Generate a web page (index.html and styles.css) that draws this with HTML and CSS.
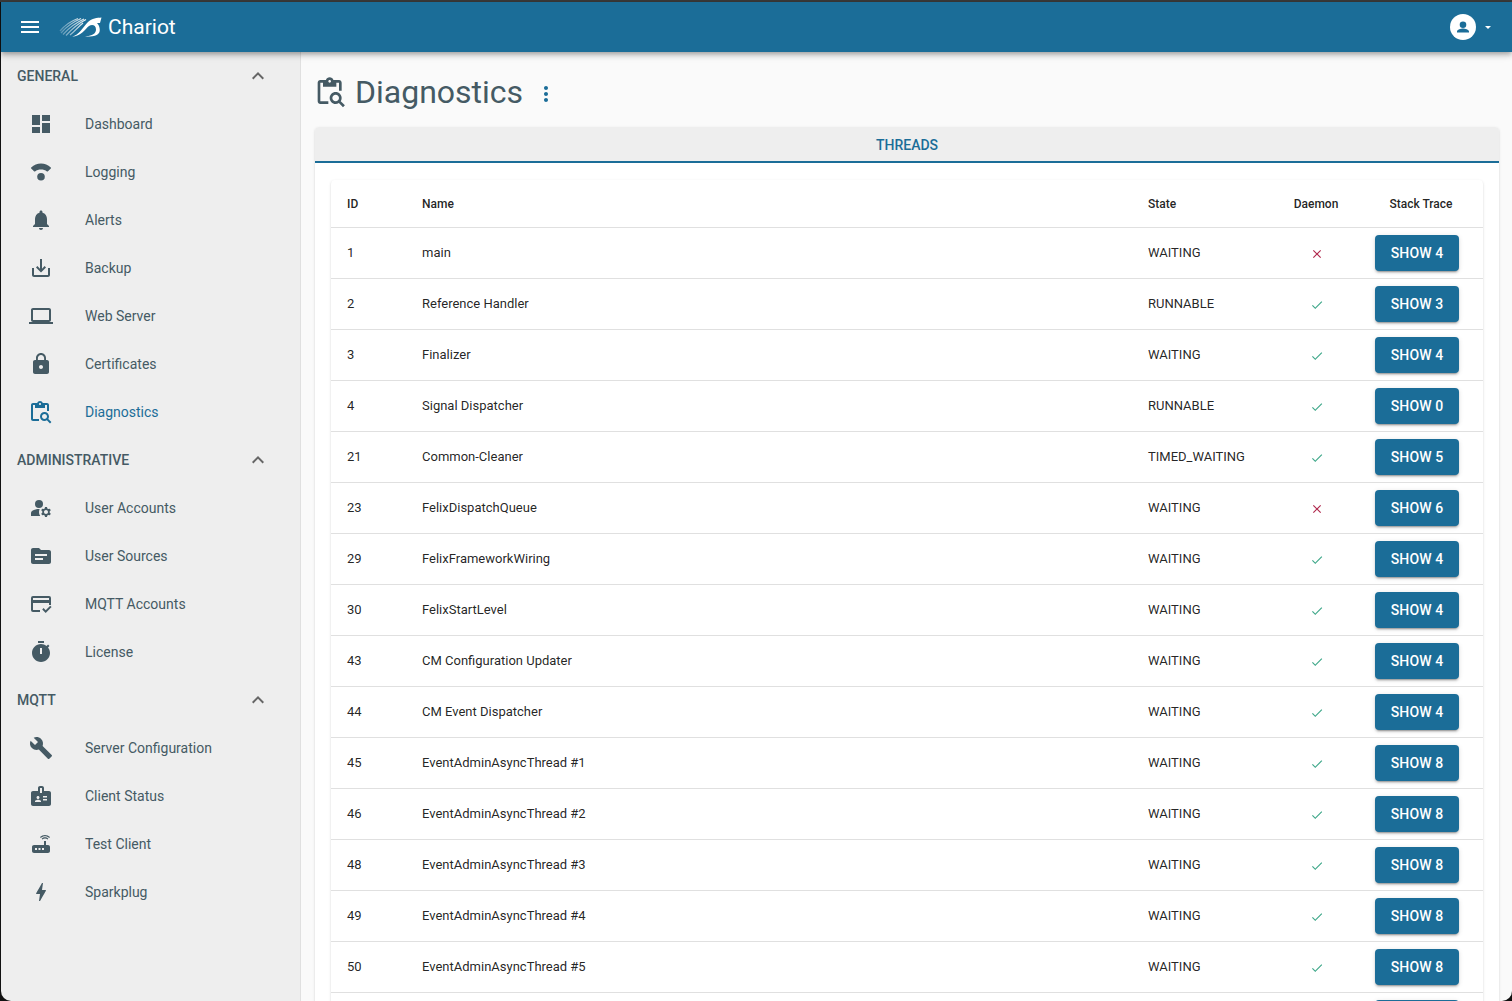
FILE: index.html
```html
<!DOCTYPE html>
<html lang="en">
<head>
<meta charset="utf-8">
<title>Chariot - Diagnostics</title>
<link rel="stylesheet" href="styles.css">
</head>
<body>
<div class="app">
  <header class="topbar">
    <svg class="menu-icon" viewBox="0 0 24 24"><path d="M3 18h18v-2H3v2zm0-5h18v-2H3v2zm0-7v2h18V6H3z"/></svg>
    <svg class="logo" viewBox="0 0 43 20">
      <defs><linearGradient id="fade" x1="0" y1="0" x2="1" y2="0"><stop offset="0" stop-color="#fff" stop-opacity=".25"/><stop offset="1" stop-color="#fff" stop-opacity=".95"/></linearGradient></defs>
      <path class="logo-streak" d="M1 14 C6 8 12 4 19 1.500 M2 16 C7 10 14 5 22 1.500 M4 17.500 C9 12 16 6 25 2 M7 18.500 C12 13 18 7 27 2.500 M11 18 C15 15 19 10 24 6"/>
      <path d="M13 19.500 C20 18.500 24 10 29 5 C33 1 38 1 42.500 .500 L41 6 L38 6 C41 9 41.500 14 40 16 C37 20 30 20 26 19 C32 19.500 37 17 37 12.500 C37 8 33 7 30 9 C26 12 22 19.500 13 19.500 Z"/>
    </svg>
    <span class="brand">Chariot</span>
    <span class="spacer"></span>
    <svg class="avatar" viewBox="0 0 26 26"><circle class="avatar-bg" cx="13" cy="13" r="13"/><path class="avatar-person" d="M13 7.500a3.300 3.300 0 1 1 0 6.600 3.300 3.300 0 0 1 0-6.600zM7 18.500v-.9c0-2 4-3 6-3s6 1 6 3v.9H7z"/></svg>
    <svg class="caret" viewBox="0 0 6 3"><path d="M0 0h6L3 3z"/></svg>
  </header>
  <div class="body">
    <nav class="sidebar">
      <div class="group-head"><span>GENERAL</span><svg class="chev" viewBox="0 0 24 24"><path d="M12 8l-6 6 1.410 1.410L12 10.830l4.590 4.580L18 14z"/></svg></div>
      <a class="item"><svg class="ico" viewBox="0 0 24 24"><path d="M3 13h8V3H3v10zm0 8h8v-6H3v6zm10 0h8V11h-8v10zm0-18v6h8V3h-8z"/></svg>Dashboard</a>
      <a class="item"><svg class="ico" viewBox="0 0 24 24"><path d="M2.200 7.600C5 5 8.300 3.600 12 3.600s7 1.400 9.800 4c.3.3.3.7 0 1L19 11.300c-.3.3-.7.3-1 .1-1.700-1.200-3.800-1.800-6-1.800s-4.300.6-6 1.800c-.3.2-.7.2-1-.1L2.200 8.600c-.3-.3-.3-.7 0-1z"/><circle cx="12" cy="16.700" r="3.800"/></svg>Logging</a>
      <a class="item"><svg class="ico" viewBox="0 0 24 24"><path d="M12 22c1.100 0 2-.9 2-2h-4c0 1.100.89 2 2 2zm6-6v-5c0-3.070-1.640-5.640-4.500-6.320V4c0-.83-.67-1.500-1.500-1.500s-1.500.67-1.500 1.500v.68C7.630 5.360 6 7.920 6 11v5l-2 2v1h16v-1l-2-2z"/></svg>Alerts</a>
      <a class="item"><svg class="ico" viewBox="0 0 24 24"><path d="M19 12v7H5v-7H3v7c0 1.100.9 2 2 2h14c1.100 0 2-.9 2-2v-7h-2zm-6 .67l2.590-2.580L17 11.500l-5 5-5-5 1.410-1.410L11 12.670V3h2z"/></svg>Backup</a>
      <a class="item"><svg class="ico" viewBox="0 0 24 24"><path d="M20 18c1.100 0 1.990-.9 1.990-2L22 6c0-1.100-.9-2-2-2H4c-1.100 0-2 .9-2 2v10c0 1.100.9 2 2 2H0v2h24v-2h-4zM4 6h16v10H4V6z"/></svg>Web Server</a>
      <a class="item"><svg class="ico" viewBox="0 0 24 24"><path d="M18 8h-1V6c0-2.760-2.240-5-5-5S7 3.240 7 6v2H6c-1.100 0-2 .9-2 2v10c0 1.100.9 2 2 2h12c1.100 0 2-.9 2-2V10c0-1.100-.9-2-2-2zm-6 9c-1.100 0-2-.9-2-2s.9-2 2-2 2 .9 2 2-.9 2-2 2zm3.100-9H8.900V6c0-1.710 1.390-3.100 3.100-3.100 1.710 0 3.100 1.390 3.100 3.100v2z"/></svg>Certificates</a>
      <a class="item active"><svg class="ico" viewBox="0 0 24 24"><path d="M20 11V5c0-1.100-.9-2-2-2h-4.180C13.400 1.840 12.300 1 11 1s-2.400.84-2.820 2H4c-1.100 0-2 .9-2 2v14c0 1.100.9 2 2 2h6v-2H4V5h2v3h10V5h2v6h2zm-9-6c-.55 0-1-.45-1-1s.45-1 1-1 1 .45 1 1-.45 1-1 1z"/><path d="M15.500 12C13 12 11 14 11 16.500s2 4.500 4.500 4.500c.88 0 1.700-.26 2.390-.7L21 23.420 22.420 22l-3.120-3.110c.44-.69.7-1.510.7-2.390C20 14 18 12 15.500 12zm0 7c-1.380 0-2.500-1.120-2.500-2.500s1.120-2.500 2.500-2.500 2.500 1.120 2.500 2.500-1.120 2.500-2.500 2.500z"/></svg>Diagnostics</a>
      <div class="group-head"><span>ADMINISTRATIVE</span><svg class="chev" viewBox="0 0 24 24"><path d="M12 8l-6 6 1.410 1.410L12 10.830l4.590 4.580L18 14z"/></svg></div>
      <a class="item"><svg class="ico" viewBox="0 0 24 24"><circle cx="10" cy="8" r="4"/><path d="M10.670 13.020c-.22-.01-.44-.02-.67-.02-2.420 0-4.680.67-6.610 1.820-.88.52-1.390 1.500-1.390 2.530V20h9.260c-.79-1.130-1.260-2.510-1.260-4 0-1.070.25-2.070.67-2.980z"/><path d="M20.750 16c0-.22-.03-.42-.06-.63l1.140-1.010-1-1.730-1.450.49c-.32-.27-.68-.48-1.080-.63L18 11h-2l-.3 1.490c-.4.15-.76.36-1.080.63l-1.450-.49-1 1.730 1.140 1.010c-.03.21-.06.41-.06.63s.03.42.06.63l-1.140 1.010 1 1.730 1.450-.49c.32.27.68.48 1.080.63L16 21h2l.3-1.490c.4-.15.76-.36 1.080-.63l1.450.49 1-1.730-1.140-1.010c.03-.21.06-.41.06-.63zM17 18c-1.100 0-2-.9-2-2s.9-2 2-2 2 .9 2 2-.9 2-2 2z"/></svg>User Accounts</a>
      <a class="item"><svg class="ico" viewBox="0 0 24 24"><path d="M20 6h-8l-2-2H4c-1.100 0-1.990.9-1.990 2L2 18c0 1.100.9 2 2 2h16c1.100 0 2-.9 2-2V8c0-1.100-.9-2-2-2zm-6 10H6v-2h8v2zm4-4H6v-2h12v2z"/></svg>User Sources</a>
      <a class="item"><svg class="ico" viewBox="0 0 24 24"><path d="M4 4h16a2 2 0 0 1 2 2v7h-2v-2H4v7h7v2H4a2 2 0 0 1-2-2V6a2 2 0 0 1 2-2zm0 2v2h16V6H4z"/><path d="M13.200 17.500l1.400-1.400 2.100 2.100 4.500-4.500 1.400 1.400-5.900 5.900z"/></svg>MQTT Accounts</a>
      <a class="item"><svg class="ico" viewBox="0 0 24 24"><path fill-rule="evenodd" d="M15 1H9v2h6V1zm-4 13h2V8h-2v6zm8.030-6.610l1.420-1.420c-.43-.51-.9-.99-1.410-1.410l-1.420 1.420C16.070 4.740 14.120 4 12 4c-4.970 0-9 4.030-9 9s4.020 9 9 9 9-4.030 9-9c0-2.120-.74-4.070-1.970-5.610z"/></svg>License</a>
      <div class="group-head"><span>MQTT</span><svg class="chev" viewBox="0 0 24 24"><path d="M12 8l-6 6 1.410 1.410L12 10.830l4.590 4.580L18 14z"/></svg></div>
      <a class="item"><svg class="ico" viewBox="0 0 24 24"><path d="M22.700 19l-9.100-9.100c.9-2.300.4-5-1.500-6.900-2-2-5-2.400-7.400-1.300L9 6 6 9 1.600 4.700C.4 7.100.9 10.100 2.900 12.100c1.900 1.900 4.600 2.400 6.900 1.500l9.100 9.100c.4.4 1 .4 1.400 0l2.300-2.300c.5-.4.5-1.100.1-1.400z"/></svg>Server Configuration</a>
      <a class="item"><svg class="ico" viewBox="0 0 24 24"><path d="M20 7h-5V4c0-1.100-.9-2-2-2h-2c-1.100 0-2 .9-2 2v3H4c-1.100 0-2 .9-2 2v11c0 1.100.9 2 2 2h16c1.100 0 2-.9 2-2V9c0-1.100-.9-2-2-2zM9 12c.83 0 1.500.67 1.500 1.500S9.830 15 9 15s-1.500-.67-1.500-1.500S8.170 12 9 12zm3 6H6v-.75c0-1 2-1.500 3-1.500s3 .5 3 1.500V18zm1-9h-2V4h2v5zm5 7.500h-4V15h4v1.500zm0-3h-4V12h4v1.500z"/></svg>Client Status</a>
      <a class="item"><svg class="ico" viewBox="0 0 24 24"><path d="M20.200 5.900l.8-.8C19.600 3.700 17.800 3 16 3s-3.600.7-5 2.100l.8.8C13 4.800 14.500 4.200 16 4.200s3 .6 4.200 1.700zm-.9.8c-.9-.9-2.100-1.400-3.300-1.400s-2.400.5-3.300 1.400l.8.8c.7-.7 1.600-1 2.500-1 .9 0 1.800.3 2.500 1l.8-.8zM19 13h-2V9h-2v4H5c-1.100 0-2 .9-2 2v4c0 1.100.9 2 2 2h14c1.100 0 2-.9 2-2v-4c0-1.100-.9-2-2-2zM8 18H6v-2h2v2zm3.500 0h-2v-2h2v2zm3.500 0h-2v-2h2v2z"/></svg>Test Client</a>
      <a class="item"><svg class="ico" viewBox="0 0 24 24"><path d="M11 21h-1l1-7H7.500c-.58 0-.57-.32-.38-.66.19-.34.05-.08.07-.12C8.480 10.940 10.420 7.540 13 3h1l-1 7h3.500c.49 0 .56.33.47.51l-.07.15C12.960 17.550 11 21 11 21z"/></svg>Sparkplug</a>
    </nav>
    <main class="main">
      <div class="title-row">
        <svg class="title-ico" viewBox="0 0 24 24"><path d="M20 11V5c0-1.100-.9-2-2-2h-4.180C13.400 1.840 12.300 1 11 1s-2.400.84-2.820 2H4c-1.100 0-2 .9-2 2v14c0 1.100.9 2 2 2h6v-2H4V5h2v3h10V5h2v6h2zm-9-6c-.55 0-1-.45-1-1s.45-1 1-1 1 .45 1 1-.45 1-1 1z"/><path d="M15.500 12C13 12 11 14 11 16.500s2 4.500 4.500 4.500c.88 0 1.700-.26 2.390-.7L21 23.420 22.420 22l-3.120-3.110c.44-.69.7-1.510.7-2.390C20 14 18 12 15.500 12zm0 7c-1.380 0-2.500-1.120-2.500-2.500s1.120-2.500 2.500-2.500 2.500 1.120 2.500 2.500-1.120 2.500-2.500 2.500z"/></svg>
        <h1 class="title">Diagnostics</h1>
        <svg class="more" viewBox="0 0 24 24"><path d="M12 8c1.100 0 2-.9 2-2s-.9-2-2-2-2 .9-2 2 .9 2 2 2zm0 2c-1.100 0-2 .9-2 2s.9 2 2 2 2-.9 2-2-.9-2-2-2zm0 6c-1.100 0-2 .9-2 2s.9 2 2 2 2-.9 2-2-.9-2-2-2z"/></svg>
      </div>
      <section class="card">
        <div class="tab"><span>THREADS</span></div>
        <div class="card-body">
          <div class="table-wrap">
            <table class="tbl">
              <colgroup><col class="c-id"><col class="c-name"><col class="c-state"><col class="c-daemon"><col class="c-trace"></colgroup>
              <thead><tr><th>ID</th><th>Name</th><th>State</th><th class="center">Daemon</th><th class="center">Stack Trace</th></tr></thead>
              <tbody id="rows"></tbody>
            </table>
          </div>
        </div>
      </section>
    </main>
  </div>
</div>
<script src="app.js"></script>
</body>
</html>
```

FILE: styles.css
```css
* { box-sizing: border-box; }
html, body { margin: 0; height: 100%; overflow: hidden; }
body { background: #0a0a0a; font-family: Roboto, "Liberation Sans", sans-serif; }
.app { height: 1001px; width: 1512px; border-top: 2px solid #3a3a3a; padding-left: 1px; background: #111; display: flex; flex-direction: column; }
.topbar { height: 50px; flex: none; background: #1b6d98; color: #fff; display: flex; align-items: center; padding-left: 16.5px; position: relative; z-index: 2; box-shadow: 0 2px 4px -1px rgba(0,0,0,.2), 0 4px 5px 0 rgba(0,0,0,.14), 0 1px 10px 0 rgba(0,0,0,.12); }
.menu-icon { width: 24px; height: 24px; fill: #fff; flex: none; }
.logo { width: 43px; height: 20px; margin-left: 17.5px; fill: #fff; flex: none; }
.logo-streak { fill: none; stroke: url(#fade); stroke-width: 1.3px; }
.brand { font-size: 21px; margin-left: 6px; line-height: 50px; }
.spacer { flex: 1; }
.avatar { width: 26px; height: 26px; flex: none; }
.avatar-bg { fill: #fff; }
.avatar-person { fill: #1b6d98; }
.caret { width: 6px; height: 3px; fill: #fff; margin-left: 9px; margin-right: 21px; flex: none; }
.body { flex: 1; display: flex; min-height: 0; border-radius: 0 0 10px 10px; overflow: hidden; }
.sidebar { width: 300px; flex: none; background: #eee; border-right: 1px solid #e0e0e0; color: #455a64; }
.group-head { height: 48px; display: flex; align-items: center; justify-content: space-between; padding: 0 30px 0 16px; font-size: 14px; font-weight: 500; }
.chev { width: 24px; height: 24px; fill: #666; }
.item { height: 48px; display: flex; align-items: center; padding-left: 28px; font-size: 14px; color: #455a64; }
.ico { width: 24px; height: 24px; fill: #455a64; margin-right: 32px; flex: none; }
.item.active { color: #1b6d98; }
.item.active .ico { fill: #1b6d98; }
.main { flex: 1; min-width: 0; background: #fafafa; padding: 0 13px 0 14px; overflow: hidden; }
.title-row { height: 75px; display: flex; align-items: center; padding: 5px 0 0 0; }
.title-ico { width: 32px; height: 32px; fill: #455a64; flex: none; margin-right: 8px; }
.title { margin: 0; font-size: 32px; font-weight: 400; color: #455a64; }
.more { width: 24px; height: 24px; fill: #1b6d98; margin-left: 11px; margin-top: 3px; flex: none; }
.card { background: #fff; border-radius: 4px 4px 0 0; box-shadow: 0 2px 1px -1px rgba(0,0,0,.2), 0 1px 1px 0 rgba(0,0,0,.14), 0 1px 3px 0 rgba(0,0,0,.12); }
.tab { height: 36px; background: #eee; border-bottom: 2px solid #1b6d98; border-radius: 4px 4px 0 0; text-align: center; font-size: 14px; font-weight: 500; color: #1b6d98; line-height: 36px; }
.card-body { padding: 17px 16px 0; }
.table-wrap { background: #fff; border-radius: 4px 4px 0 0; box-shadow: 0 2px 1px -1px rgba(0,0,0,.2), 0 1px 1px 0 rgba(0,0,0,.14), 0 1px 3px 0 rgba(0,0,0,.12); }
.tbl { width: 100%; border-collapse: collapse; table-layout: fixed; font-size: 13px; color: rgba(0,0,0,.87); }
.c-id { width: 75px; }
.c-name { width: 726px; }
.c-state { width: 141px; }
.c-daemon { width: 86px; }
.c-trace { width: 124px; }
.tbl th { height: 47px; text-align: left; padding: 2px 0 0 16px; font-weight: 500; font-size: 12px; line-height: 16px; border-bottom: 1px solid #e0e0e0; }
.tbl th.center { text-align: center; padding: 2px 0 0; }
.tbl td { height: 51px; padding: 0 0 0 16px; border-bottom: 1px solid #e0e0e0; font-size: 13px; }
.tbl td.center { text-align: center; padding: 0; }
.mark { width: 14px; height: 14px; display: inline-block; vertical-align: middle; margin: 1px 0 0 1px; }
.mark.yes { fill: #3fa88a; }
.mark.no { fill: #b0294e; }
.btn { width: 84px; height: 36px; margin-top: 1px; display: block; border: 0; border-radius: 4px; background: #1b6d98; color: #fff; font: 500 14px Roboto, "Liberation Sans", sans-serif; letter-spacing: .1px; padding: 0; box-shadow: 0 3px 1px -2px rgba(0,0,0,.2), 0 2px 2px 0 rgba(0,0,0,.14), 0 1px 5px 0 rgba(0,0,0,.12); }
```

FILE: app.js
```js
var data = [
  [1, "main", "WAITING", 0, "SHOW 4"], [2, "Reference Handler", "RUNNABLE", 1, "SHOW 3"], [3, "Finalizer", "WAITING", 1, "SHOW 4"],
  [4, "Signal Dispatcher", "RUNNABLE", 1, "SHOW 0"], [21, "Common-Cleaner", "TIMED_WAITING", 1, "SHOW 5"], [23, "FelixDispatchQueue", "WAITING", 0, "SHOW 6"],
  [29, "FelixFrameworkWiring", "WAITING", 1, "SHOW 4"], [30, "FelixStartLevel", "WAITING", 1, "SHOW 4"], [43, "CM Configuration Updater", "WAITING", 1, "SHOW 4"],
  [44, "CM Event Dispatcher", "WAITING", 1, "SHOW 4"], [45, "EventAdminAsyncThread #1", "WAITING", 1, "SHOW 8"], [46, "EventAdminAsyncThread #2", "WAITING", 1, "SHOW 8"],
  [48, "EventAdminAsyncThread #3", "WAITING", 1, "SHOW 8"], [49, "EventAdminAsyncThread #4", "WAITING", 1, "SHOW 8"], [50, "EventAdminAsyncThread #5", "WAITING", 1, "SHOW 8"],
  ["", "", "", 1, ""]
];
var yes = '<svg class="mark yes" viewBox="0 0 24 24"><path d="M9 16.170L4.830 12l-1.420 1.410L9 19 21 7l-1.410-1.410z"/></svg>';
var no = '<svg class="mark no" viewBox="0 0 24 24"><path d="M19 6.410L17.590 5 12 10.590 6.410 5 5 6.410 10.590 12 5 17.590 6.410 19 12 13.410 17.590 19 19 17.590 13.410 12z"/></svg>';
document.getElementById("rows").innerHTML = data.map(function (r) {
  return "<tr><td>" + r[0] + "</td><td>" + r[1] + "</td><td>" + r[2] + '</td><td class="center">' + (r[3] ? yes : no) +
    '</td><td><button class="btn">' + r[4] + "</button></td></tr>";
}).join("");
```
